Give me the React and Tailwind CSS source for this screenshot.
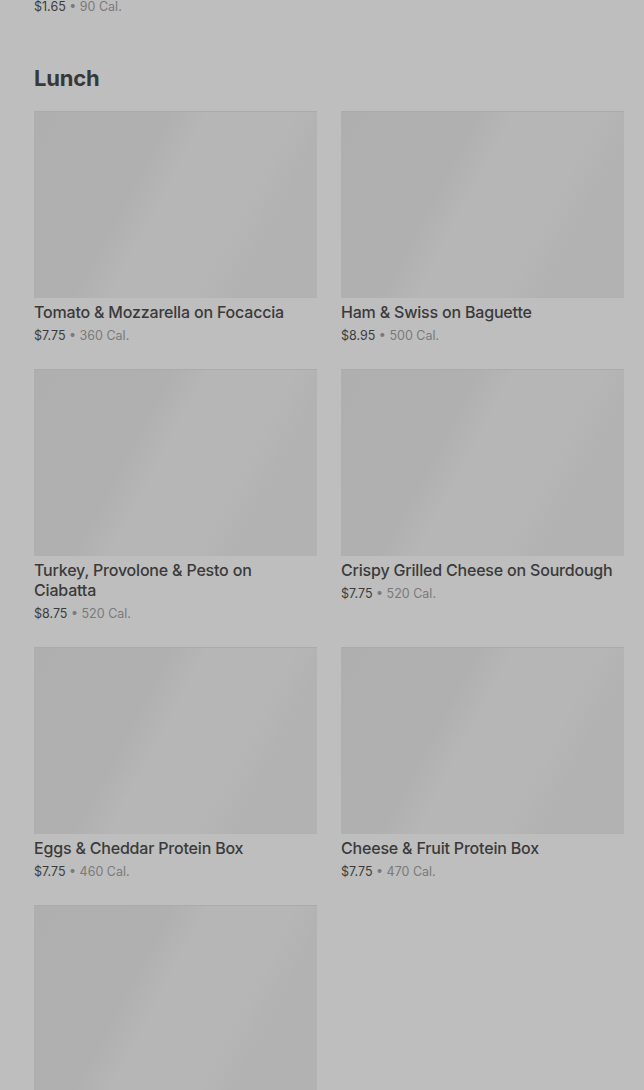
import React from 'react';

const items = [
  { name: 'Tomato & Mozzarella on Focaccia', price: '$7.75', cal: '360 Cal.' },
  { name: 'Ham & Swiss on Baguette', price: '$8.95', cal: '500 Cal.' },
  { name: 'Turkey, Provolone & Pesto on Ciabatta', price: '$8.75', cal: '520 Cal.' },
  { name: 'Crispy Grilled Cheese on Sourdough', price: '$7.75', cal: '520 Cal.' },
  { name: 'Eggs & Cheddar Protein Box', price: '$7.75', cal: '460 Cal.' },
  { name: 'Cheese & Fruit Protein Box', price: '$7.75', cal: '470 Cal.' },
  { name: '', price: '', cal: '' },
];

function PriceLine({ price, cal, tight }) {
  return (
    <div className={tight ? 'text-[12.5px] leading-[14px]' : 'text-[12.5px] leading-4'}>
      <span className="text-[#3c3c3c]">{price}</span>
      <span className="text-[#7a7a7a]"> • {cal}</span>
    </div>
  );
}

function MenuCard({ item }) {
  return (
    <div className="flex flex-col">
      <div className="h-[187px] w-full bg-[linear-gradient(118deg,#afafaf_0%,#b0b0b0_36%,#b6b6b6_46%,#b6b6b6_68%,#b2b2b2_78%,#b2b2b2_100%)] border-t border-[#ababab]" />
      {item.name && (
        <>
          <div className="mt-1 text-[16px] leading-5 font-medium tracking-[-0.012em] text-[#3a3a3a]">{item.name}</div>
          <div className="mt-[6px]">
            <PriceLine price={item.price} cal={item.cal} />
          </div>
        </>
      )}
    </div>
  );
}

export default function App() {
  return (
    <div className="h-[1090px] overflow-hidden bg-[#bebebe] pl-[34px] pr-[20px] font-['Inter',sans-serif]">
      <PriceLine price="$1.65" cal="90 Cal." tight />
      <h2 className="mt-[50px] text-[22px] leading-7 font-bold text-[#383838] tracking-[-0.01em]">Lunch</h2>
      <div className="mt-[19px] grid grid-cols-2 gap-x-6 gap-y-[25px]">
        {items.map((item, i) => (
          <MenuCard key={i} item={item} />
        ))}
      </div>
    </div>
  );
}
